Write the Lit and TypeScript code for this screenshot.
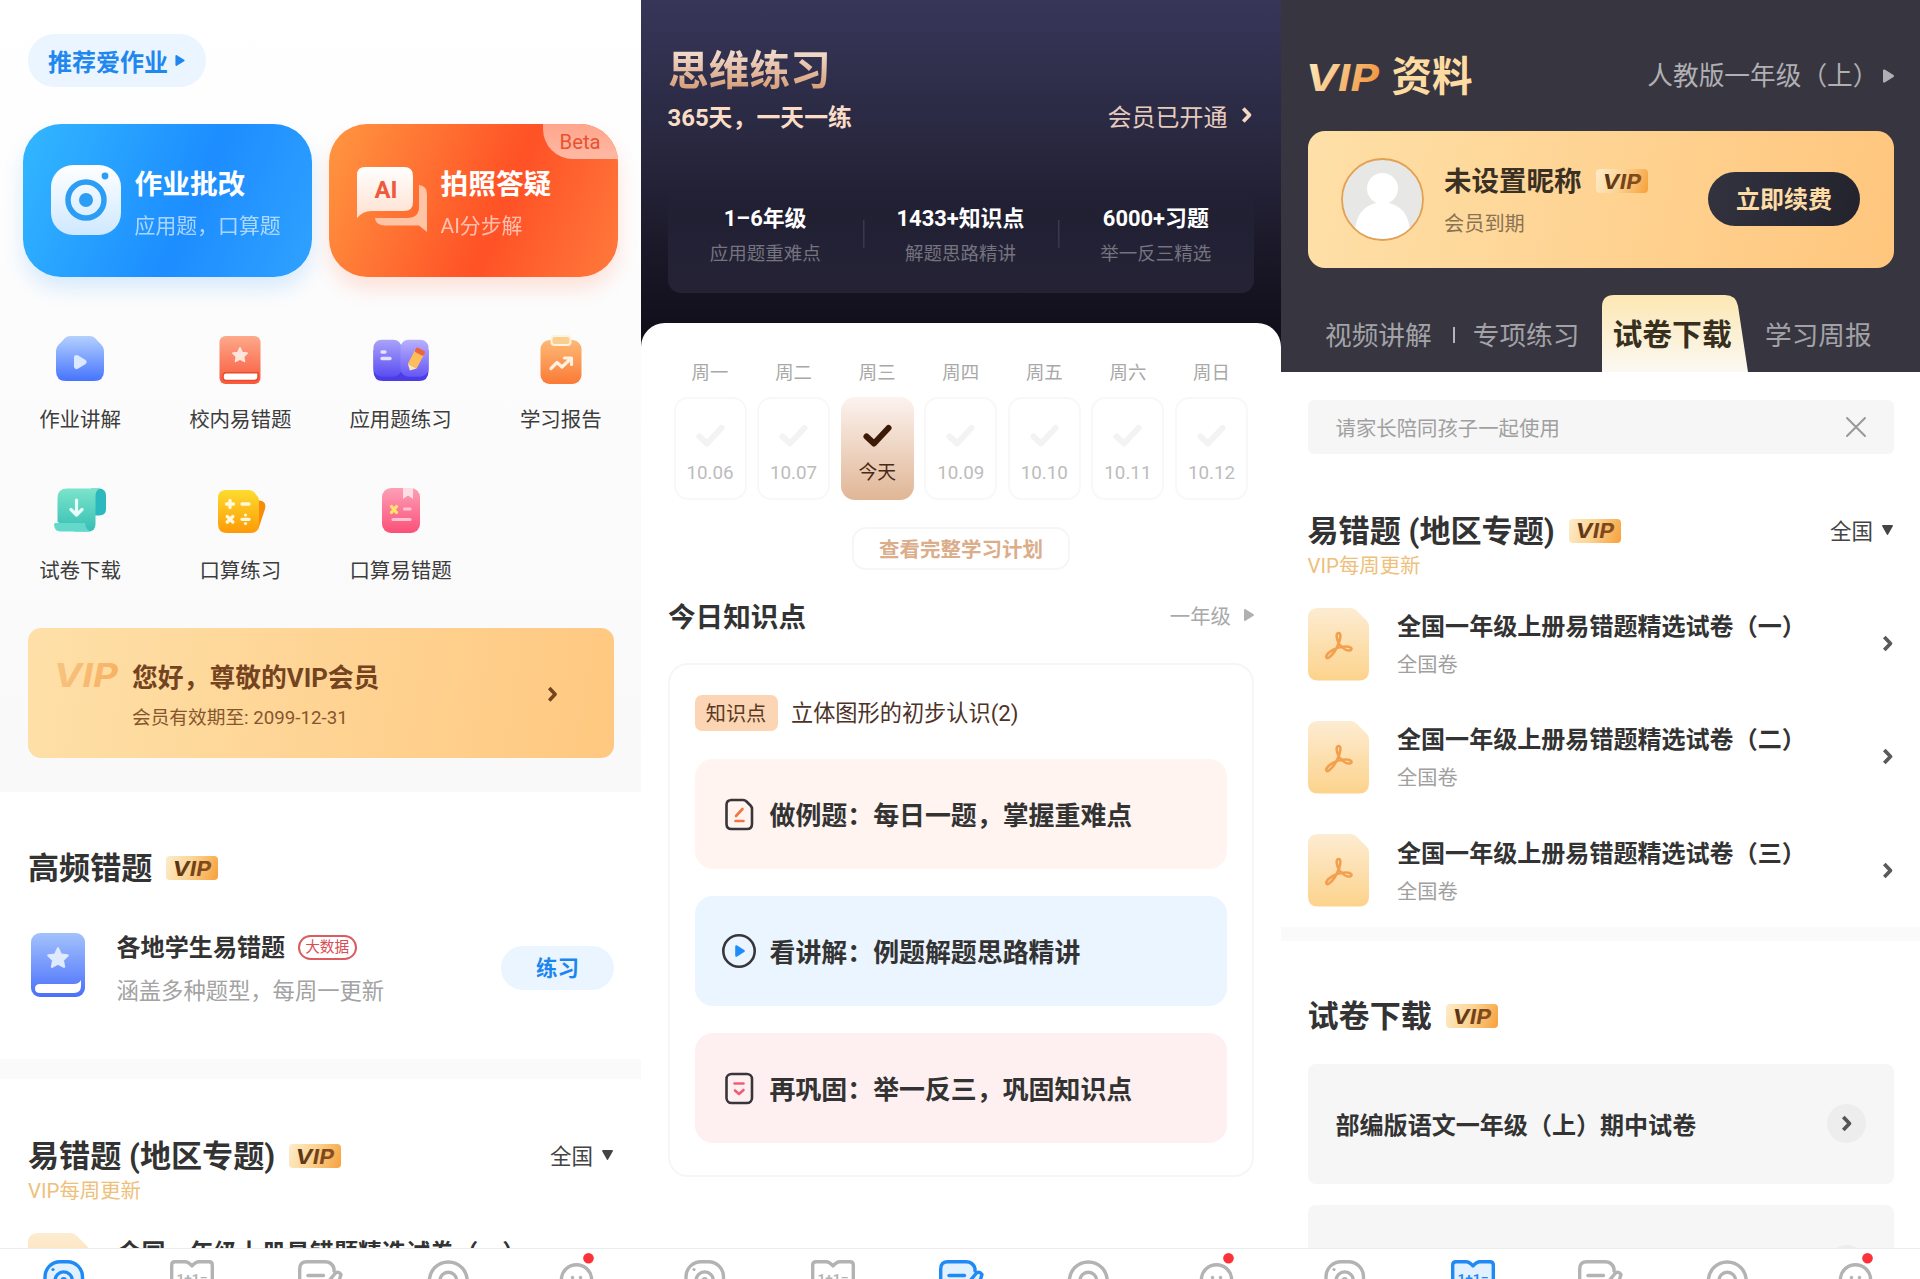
import { LitElement, html, svg, css } from "lit";
import { customElement, property } from "lit/decorators.js";
import { classMap } from "lit/directives/class-map.js";

const base = css`
  :host { display: block; box-sizing: border-box; font-family: Roboto, "Noto Sans CJK SC", sans-serif; color: #333; }
  *, *::before { box-sizing: border-box; }
  svg { display: block; flex: none; overflow: visible; }
  .row { display: flex; align-items: center; }
  .between { justify-content: space-between; }
  .h1 { font-size: 31.1px; line-height: 40px; font-weight: 700; white-space: pre; }
`;

/* ---------- shared glyphs ---------- */

const chevron = (w: number, h: number, color: string, sw = 3.7) => html`
  <svg width=${w} height=${h} viewBox="0 0 10 15" fill="none" stroke=${color} stroke-width=${sw}>
    <path d="M1.3 1 L7.500 7.5 L1.3 14" stroke-linejoin="round"/></svg>`;

const triRight = (w: number, h: number, color: string) => html`
  <svg width=${w} height=${h} viewBox="0 0 10 12" fill=${color} stroke=${color} stroke-width="2" stroke-linejoin="round">
    <path d="M1 1 L9 6 L1 11 Z"/></svg>`;

const triDown = () => html`
  <svg width="11" height="10" viewBox="0 0 11 10" fill="#444" stroke="#444" stroke-width="1.4" stroke-linejoin="round">
    <path d="M.8 .8 H10.2 L5.5 9.2 Z"/></svg>`;

const vipLogo = (w: number, h: number, from: string, to: string) => html`
  <svg width=${w} height=${h}>
    <defs><linearGradient id="vg" x1="0" x2="1" y1="0" y2=".3"><stop offset=".2" stop-color=${from}/><stop offset="1" stop-color=${to}/></linearGradient></defs>
    <text x=${-w * 0.04} y=${h} fill="url(#vg)" font-family="Inter, sans-serif" font-style="italic" font-weight="700"
      font-size=${h / 0.727} textLength=${w * 1.04} lengthAdjust="spacingAndGlyphs">VIP</text></svg>`;

@customElement("vip-badge")
class VipBadge extends LitElement {
  static styles = [base, css`
    :host { width: 52px; height: 24px; border-radius: 4px; padding: 4.500px 0 0 8px; margin-top: -2px;
      background: linear-gradient(110deg, #fdeccb 0%, #fbd596 45%, #f7a03a 100%); }
  `];
  render() { return vipLogo(37, 14.5, "#5b3313", "#8a5120"); }
}

/* ---------- bottom tab bar ---------- */

@customElement("tab-bar")
class TabBar extends LitElement {
  @property({ type: Number }) active = 0;
  static styles = [base, css`
    :host { height: 31px; flex: none; background: #fff; border-top: 1px solid #ececec; overflow: hidden; }
    .tabs { display: grid; grid-template-columns: repeat(5, 1fr); padding-top: 11px; height: 60px; }
    .tab { display: flex; justify-content: center; color: #b3b3b3; --tint: transparent; }
    .tab.on { color: #1f8af5; --tint: #e2f1ff; }
    .tab svg { fill: none; stroke: currentColor; stroke-width: 3.4; stroke-linejoin: round; stroke-linecap: round; }
    .solid { fill: currentColor; stroke: none; }
    .tint { fill: var(--tint); }
    .sum { font: 700 12.5px Roboto, sans-serif; fill: currentColor; stroke: none; }
    .dot { fill: #fb3338; stroke: none; }
  `];
  icons = [
    svg`<rect class="tint" x="3" y="1.7" width="37.5" height="38" rx="15"/><circle cx="21.7" cy="20.5" r="8.6"/><circle cx="21.7" cy="20.5" r="2.4" stroke-width="2"/><circle class="solid" cx="11" cy="9.5" r="1.6"/>`,
    svg`<path class="tint" d="M1.7 40 V5 Q1.7 1.7 5 1.7 H15 Q18.5 1.7 22 6 Q25.500 1.7 29 1.7 H39 Q42.300 1.700 42.300 5 V40 Z"/><text class="sum" x="6.500" y="23" textLength="31" lengthAdjust="spacingAndGlyphs">1+1=</text>`,
    svg`<path class="tint" d="M30 40 H6 Q1.700 40 1.700 34 V9 Q1.700 1.700 9 1.700 H27 Q34 1.700 36 8.500 V11 M26 32 L27.500 25 L37.500 13 Q40.500 11 43 14.500 L41 21 L31 32 Z"/><path d="M10 15.500 H25.500"/>`,
    svg`<circle class="tint" cx="21.300" cy="21" r="19"/><circle cx="21.300" cy="20.500" r="8.300"/>`,
    svg`<path class="tint" d="M6.500 34 V17.500 A15.200 15.200 0 0 1 36.500 17.500 V34 Z"/><circle class="solid" cx="17.500" cy="17.500" r="1.700"/><circle class="solid" cx="25.500" cy="17.500" r="1.700"/><circle class="dot" cx="33.500" cy="-1.800" r="5.300"/>`,
  ];
  render() {
    return html`<div class="tabs">${this.icons.map((g, i) => html`
      <div class=${classMap({ tab: true, on: i === this.active })}><svg width="44" height="44" viewBox="0 0 44 44">${g}</svg></div>`)}</div>`;
  }
}

/* ---------- regional papers ---------- */

@customElement("region-papers")
class RegionPapers extends LitElement {
  @property({ type: Number }) count = 3;
  static styles = [base, css`
    :host { padding-top: 58px; }
    .h1 { margin-right: 14px; }
    .pick { font-size: 21.500px; line-height: 30px; gap: 9px; margin-left: auto; margin-right: 1px; color: #444; }
    .pick svg { margin-top: -4px; }
    .note { font-size: 20.400px; line-height: 26px; color: #eec07c; margin: 1px 0 29px; }
    .item { display: grid; grid-template-columns: 61px 1fr 11px; column-gap: 28.500px; align-items: center; height: 72.500px; margin-bottom: 40.700px; }
    .name { font-size: 24.050px; line-height: 32px; font-weight: 700; margin-top: 3px; white-space: nowrap; }
    .scope { font-size: 20.200px; line-height: 28px; color: #a0a0a0; margin-top: 8px; }
  `];
  render() {
    return html`
      <div class="row"><div class="h1">易错题 (地区专题)</div><vip-badge></vip-badge>
        <div class="row pick">全国${triDown()}</div></div>
      <div class="note">VIP每周更新</div>
      ${["一", "二", "三"].slice(0, this.count).map(n => html`<div class="item">
        <svg width="61" height="72.500" viewBox="0 0 61 72.500">
          <defs><linearGradient id="f" x2="0" y2="1"><stop stop-color="#fdecd2"/><stop offset="1" stop-color="#fcd38c"/></linearGradient></defs>
          <path fill="url(#f)" d="M10 0 H43 Q46 0 48.500 2.500 L58.500 12.500 Q61 15 61 18 V62.500 Q61 72.500 51 72.500 H10 Q0 72.500 0 62.500 V10 Q0 0 10 0 Z"/>
          <path fill="none" stroke="#f2a04e" stroke-width="2.600" stroke-linejoin="round" d="M30.500 25 C27.500 25 28.500 32 31.500 36.500 C34.500 40.500 39 43 42 42.500 C45 41.500 43.500 38.500 38 38.500 C32 38.500 25 41 20.500 45 C17 48.500 18 51.500 21 49.500 C25 46.500 29.500 39 31.500 33 C33 28 32.500 25 30.500 25 Z"/>
        </svg>
        <div><div class="name">全国一年级上册易错题精选试卷（${n}）</div><div class="scope">全国卷</div></div>
        ${chevron(10, 15, "#5a5a5a")}
      </div>`)}`;
  }
}

/* ---------- home ---------- */

const star = (x: number, y: number, s: number, fill: string) => svg`<path transform="translate(${x} ${y}) scale(${s})" fill=${fill} stroke=${fill} stroke-width="2" stroke-linejoin="round" d="M0 -8 L2.400 -2.800 L8 -2.200 L3.900 1.700 L5 7.200 L0 4.500 L-5 7.200 L-3.900 1.700 L-8 -2.200 L-2.400 -2.800 Z"/>`;
const grad = (id: string, a: string, b: string) => svg`<linearGradient id=${id} x2="0" y2="1"><stop stop-color=${a}/><stop offset="1" stop-color=${b}/></linearGradient>`;

const features = [
  { label: "作业讲解", icon: svg`<defs>${grad("a", "#b5d0ff", "#4574fd")}</defs>
    <path fill="url(#a)" d="M15 1 H35 Q38 1 40 3 L47 10.500 Q49 13 49 16 V36 Q49 46 39 46 H11 Q1 46 1 36 V16 Q1 13 3 10.500 L10 3 Q12 1 15 1 Z"/>
    <path d="M21.500 22.500 L29 27 L21.500 31.500 Z" fill="#dbe8ff" stroke="#dbe8ff" stroke-width="5" stroke-linejoin="round"/>` },
  { label: "校内易错题", icon: svg`<defs>${grad("b", "#fda98b", "#f9593b")}</defs>
    <rect x="4.500" y="1" width="41" height="48" rx="6" fill="url(#b)"/><path d="M11 37.700 H43 V42 Q43 45.500 39 45.500 H11 Q8 45.500 8 41.500 Q8 37.700 11 37.700 Z" fill="#fff" stroke="#e84a2c" stroke-width="1.500"/>${star(25, 20, .88, "#ffe5dc")}` },
  { label: "应用题练习", icon: svg`<defs>${grad("c", "#aaa3fa", "#5a4df2")}${grad("c2", "#b9b1ff", "#6657f5")}</defs>
    <path fill="#4b3ce6" d="M-2.500 15 H52.500 V36 Q52.500 46 43 46 H7 Q-2.500 46 -2.500 36 Z"/>
    <rect x="-2.500" y="4.700" width="28" height="37" rx="8" fill="url(#c)"/><rect x="24.500" y="4.700" width="28" height="37" rx="8" fill="url(#c2)"/>
    <path d="M6 17 h3 M6 23.500 h8" stroke="#e5e2ff" stroke-width="3.400" stroke-linecap="round"/>
    <g transform="translate(39.500 25) rotate(28)"><rect x="-5" y="-8" width="10" height="15" fill="#fdbd58"/><path d="M-5 7 L0 12 L5 7 Z" fill="#ffe3b0"/><rect x="-5" y="-12" width="10" height="5" rx="1.500" fill="#f0633c"/></g>` },
  { label: "学习报告", icon: svg`<defs>${grad("d", "#fdb976", "#fb7a37")}</defs>
    <rect x="4.500" y="5" width="41" height="44" rx="9" fill="url(#d)"/><rect x="15.500" y="1" width="19" height="9" rx="3" fill="#f8cf8e" stroke="#fff2dc" stroke-width="2"/>
    <path d="M15 33.500 L21 27.500 L26 32 L34.500 24 M28.500 23 H35.500 V29.500" fill="none" stroke="#fff1e2" stroke-width="3.200" stroke-linecap="round" stroke-linejoin="round"/>` },
  { label: "试卷下载", icon: svg`<defs>${grad("e", "#7ce4cb", "#35bfb4")}</defs>
    <path d="M36 2.500 H44 Q51 2.500 51 10 V23 Q51 29.500 44 29.500 H38 Z" fill="#2cb9bd"/>
    <path d="M12 2.500 H46 Q40.500 3 40.500 10 V38 Q40.500 45.500 33 45.500 H20 L2.500 36 V12 Q2.500 2.500 12 2.500 Z" fill="url(#e)"/>
    <path d="M0 37 H30 Q31 45.500 37 45.500 H6 Q-1 45.500 -1 38 Z" fill="#62d9ca"/>
    <path d="M21.500 14 V28 M16 23.500 L21.500 29 L27 23.500" fill="none" stroke="#e6fffa" stroke-width="3.200" stroke-linecap="round" stroke-linejoin="round"/>` },
  { label: "口算练习", icon: svg`<defs>${grad("g", "#fddc2e", "#fd9a07")}</defs>
    <path d="M36 13 L47 15 Q51.500 17 50 23 L44 41 Q43 45 38 46 Z" fill="#f78c08"/>
    <path d="M11 4 H34 Q37 4 39 6 L43 11 Q44 12.500 44 15 V38 Q44 47 35 47 H12 Q3 47 3 38 V12 Q3 4 11 4 Z" fill="url(#g)"/>
    <g stroke="#fff8dc" stroke-width="3.300" stroke-linecap="round" fill="none"><path d="M11.500 18 h7 M15 14.500 v7 M27 18 h7 M12.300 30.500 l5.500 5.500 M17.800 30.500 l-5.500 5.500 M27 33.300 h7"/></g><circle cx="30.500" cy="29" r="1.600" fill="#fff8dc"/><circle cx="30.500" cy="37.500" r="1.600" fill="#fff8dc"/>` },
  { label: "口算易错题", icon: svg`<defs>${grad("h", "#fd9fb6", "#fb5078")}</defs>
    <rect x="6" y="2" width="38" height="45" rx="9" fill="url(#h)"/><path d="M27 2 H37 V13 L32 9.500 L27 13 Z" fill="#ffdde5"/>
    <path d="M15.500 20.500 l5 6 M20.500 20.500 l-5 6" stroke="#ffe36d" stroke-width="3.200" stroke-linecap="round"/><path d="M28.500 23 h5.500 M17 33.500 h17" stroke="#ffc3d1" stroke-width="3.200" stroke-linecap="round"/>` },
];

@customElement("home-screen")
class HomeScreen extends LitElement {
  static styles = [base, css`
    :host { display: flex; flex-direction: column; height: 1279px; background: #fff; overflow: hidden; }
    .body { flex: 1; min-height: 0; overflow: hidden; }
    .top { height: 792px; padding: 34px 27px 0 28px; background: linear-gradient(#fff 0, #fcfcfc 40%, #f9f9fa 100%); }
    .pill { width: 178px; height: 53px; border-radius: 27px; background: #ebf5ff; color: #1f87ee; font-size: 24px; font-weight: 700; padding-left: 20px; gap: 7px; white-space: nowrap; }
    .heroes { display: grid; grid-template-columns: 289px 289px; gap: 17px; margin: 37px 0 0 -5px; }
    .hero { height: 153px; border-radius: 38px; color: #fff; position: relative; overflow: hidden; display: flex; padding: 41px 0 0 27.500px; }
    .wrap { border-radius: 38px; }
    .wrap.blue { box-shadow: 0 12px 20px rgba(31,140,255,.16); }
    .wrap.orange { box-shadow: 0 12px 20px rgba(255,90,40,.16); }
    .blue .hero { background: linear-gradient(113deg, #32b6ff 2%, #1f92ff 50%, #1d8dff 58%, #2fa2ff 100%); }
    .orange .hero { background: linear-gradient(113deg, #ff9540 2%, #ff5527 55%, #ff5226 60%, #ff7a3c 100%); }
    .copy { margin-left: 14px; }
    .big { font-size: 27.700px; line-height: 38px; font-weight: 700; white-space: nowrap; margin-top: 1px; }
    .small { font-size: 20.900px; line-height: 30px; margin-top: 6.500px; opacity: .62; white-space: nowrap; }
    .beta { position: absolute; top: 0; right: 0; width: 75px; height: 35px; border-radius: 0 0 0 30px; background: linear-gradient(#ffa58c, #ffb9a4); color: #e8532f; font-size: 20.300px; line-height: 37px; padding-left: 16.500px; }
    .features { display: grid; grid-template-columns: repeat(4, 160.250px); margin: 58px -27px 0 -28px; row-gap: 51px; }
    .feature { display: flex; flex-direction: column; align-items: center; height: 100px; font-size: 20.500px; line-height: 31px; gap: 20px; color: #3d3d3d; }
    .vip { height: 130px; margin-top: 42px; border-radius: 13px; background: linear-gradient(100deg, #fee0a8, #ffc880); color: #744320; display: flex; padding: 35px 57px 0 28px; }
    .vip .t { font-size: 25.800px; line-height: 36px; font-weight: 700; margin: -3px 0 0 14px; }
    .vip .s { font-size: 18.700px; line-height: 26px; color: #87552d; margin: 9px 0 0 14px; }
    .vip .go { margin: 24px 0 0 auto; }
    .freq { height: 267px; padding: 57px 27px 0 28px; }
    .freq .h1 { margin-right: 13.500px; }
    .entry { display: flex; margin-top: 44px; padding-left: 3px; }
    .txt { margin-left: 31.500px; }
    .name { font-size: 24.100px; line-height: 32px; font-weight: 700; gap: 12.500px; margin-top: -1px; }
    .tag { font-size: 14.700px; font-weight: 400; color: #d94d55; border: 2px solid #dc5a60; height: 25px; line-height: 21px; width: 59px; border-radius: 13px; text-align: center; margin-top: -1px; }
    .desc { font-size: 22.300px; line-height: 30px; margin-top: 12px; color: #a3a3a3; }
    .go-btn { width: 113px; height: 44px; margin: 13px 0 0 auto; border-radius: 22px; background: #eaf5ff; color: #1b87ee; font-size: 21.500px; line-height: 46px; font-weight: 700; text-align: center; }
    .band { height: 20px; background: #fafafa; }
    region-papers { margin: 0 27px 0 28px; }
  `];
  render() {
    return html`<div class="body">
      <div class="top">
        <div class="row pill">推荐爱作业 ${triRight(10, 11, "#1f87ee")}</div>
        <div class="heroes">
          <div class="wrap blue"><div class="hero">
            <svg width="70" height="70" viewBox="0 0 70 70"><defs>${grad("cam", "#ffffff", "#cfe8ff")}</defs>
              <rect width="70" height="70" rx="22" fill="url(#cam)"/><circle cx="35" cy="35" r="18" fill="none" stroke="#2b9df5" stroke-width="5.500"/><circle cx="35" cy="35" r="7" fill="#2b9df5"/><circle cx="54" cy="11" r="3.400" fill="#2b9df5"/></svg>
            <div class="copy"><div class="big">作业批改</div><div class="small">应用题，口算题</div></div>
          </div></div>
          <div class="wrap orange"><div class="hero">
            <svg width="70" height="70" viewBox="0 0 70 70"><defs>${grad("ai", "#ffffff", "#ffe0d0")}</defs>
              <path fill="#ffc3a6" d="M62 20 Q70 21 70 29 V67 L62 60.500 H27 Q18.500 60 18 53 H50 Q62 53 62 42 Z"/>
              <path fill="url(#ai)" d="M8 2 H47 Q56 2 56 11 V37 Q56 46 47 46 H14 Q6 46 0 53 V10 Q0 2 8 2 Z"/>
              <text x="17.500" y="32.500" textLength="23" lengthAdjust="spacingAndGlyphs" font-family="Roboto, sans-serif" font-weight="700" font-size="23.500" fill="#ee5a3c">AI</text></svg>
            <div class="copy"><div class="big">拍照答疑</div><div class="small">AI分步解</div></div>
            <div class="beta">Beta</div>
          </div></div>
        </div>
        <div class="features">${features.map(f => html`<div class="feature"><svg width="50" height="50" viewBox="0 0 50 50">${f.icon}</svg>${f.label}</div>`)}</div>
        <div class="vip">${vipLogo(62, 24, "#f7c27f", "#f7b263")}
          <div><div class="t">您好，尊敬的VIP会员</div><div class="s">会员有效期至: 2099-12-31</div></div>
          <div class="go">${chevron(9.500, 14.500, "#744320")}</div></div>
      </div>
      <div class="freq">
        <div class="row"><div class="h1">高频错题</div><vip-badge></vip-badge></div>
        <div class="entry">
          <svg width="54" height="64" viewBox="0 0 54 64"><defs>${grad("bk", "#a3c2fd", "#4a70fb")}</defs>
            <rect width="54" height="64" rx="9" fill="url(#bk)"/><path d="M9 51 H43 Q48 51 50 47 V53 Q50 60 43 60 H9 Q4 60 4 55.500 Q4 51 9 51 Z" fill="#fff"/>${star(27, 25, 1.200, "#dfeaff")}</svg>
          <div class="txt"><div class="row name">各地学生易错题<span class="tag">大数据</span></div><div class="desc">涵盖多种题型，每周一更新</div></div>
          <div class="go-btn">练习</div>
        </div>
      </div>
      <div class="band"></div>
      <region-papers .count=${1}></region-papers>
    </div><tab-bar .active=${0}></tab-bar>`;
  }
}

/* ---------- thinking practice ---------- */

@customElement("practice-screen")
class PracticeScreen extends LitElement {
  static styles = [base, css`
    :host { display: flex; flex-direction: column; height: 1279px; background: linear-gradient(#373659 0, #292840 140px, #1d1b2c 230px, #110f1a 330px, #110f1a 350px, #fff 350px); overflow: hidden; }
    .head { height: 323px; padding: 46px 27px 0; flex: none; }
    .title { font-size: 40.700px; line-height: 50px; font-weight: 700; width: max-content; background: linear-gradient(#f0d8c9 15%, #d9a27e 80%); -webkit-background-clip: text; color: transparent; }
    .line { height: 34px; margin-top: 2px; }
    .slogan { font-size: 23.900px; font-weight: 700; color: #fbdcc6; margin-left: -.5px; }
    .member { font-size: 24px; color: #e6cbbd; gap: 14px; padding-right: 2.500px; }
    .stats { display: grid; grid-template-columns: repeat(3, 1fr); height: 123px; margin-top: 38px; border-radius: 13px; padding-top: 34px; text-align: center; background: linear-gradient(rgba(36,34,53,0) 0, #232135 60%, #242233 100%); }
    .stats > div { position: relative; left: -.5px; }
    .stats > div + div { background: linear-gradient(#3a384a, #3a384a) 0 16px / 1.500px 28px no-repeat; }
    .num { font-size: 21.900px; line-height: 30px; font-weight: 700; color: #fff; }
    .cap { font-size: 18.500px; line-height: 26px; margin-top: 7px; color: #75737f; }
    .sheet { flex: 1; min-height: 0; background: #fff; border-radius: 24px 24px 0 0; padding: 36px 27px 0; }
    .week { display: grid; grid-template-columns: repeat(7, 73px); justify-content: space-between; padding: 0 6px 0 5.500px; text-align: center; }
    .wd { font-size: 18.400px; line-height: 28px; color: #a8a8a8; }
    .day { height: 103px; margin-top: 10px; border: 2px solid #f8f8f8; border-radius: 14px; display: flex; flex-direction: column; align-items: center; padding-top: 24px; font-size: 18.800px; line-height: 26px; color: #bcbcbc; gap: 12px; --tick: #f3f3f3; }
    .day.now { border: 0; padding-top: 26px; background: linear-gradient(#fcf3ef, #e0b696); color: #4a2a15; --tick: #3c1a06; }
    .day svg { stroke: var(--tick); }
    .plan { width: 218px; height: 43px; margin: 26.500px auto 0; border: 2px solid #f6f6f6; border-radius: 14px; font-size: 20.500px; line-height: 42px; text-align: center; font-weight: 700; color: #dbad8b; }
    .sub { margin-top: 25.500px; height: 40px; }
    .sub .h { font-size: 27.600px; font-weight: 700; }
    .grade { font-size: 20.400px; color: #a9a9a9; gap: 13px; }
    .card { margin-top: 27.500px; height: 514px; border: 2px solid #f6f6f6; border-radius: 20px; padding: 30.500px 25px 0 24.500px; }
    .topic { gap: 13.500px; height: 36px; margin-bottom: 28px; font-size: 22.200px; line-height: 34px; color: #4c3227; }
    .chip { background: #fcd6b4; border-radius: 7px; width: 83px; height: 36px; line-height: 38px; text-align: center; font-size: 20.200px; color: #5a3a26; }
    .step { height: 110px; border-radius: 18px; margin-bottom: 27.200px; padding: 0 0 1px 27px; gap: 14px; font-size: 25.920px; font-weight: 700; }
    .s0 { background: #fff4f0; } .s1 { background: #eaf5ff; } .s2 { background: #fef0f0; }
  `];
  days = ["10.06", "10.07", "今天", "10.09", "10.10", "10.11", "10.12"];
  steps = [
    { t: "做例题：每日一题，掌握重难点", i: svg`<path d="M9 3 H21 Q23 3 24.500 4.500 L28.500 8.500 Q30 10 30 12 V27 Q30 32 25 32 H9.500 Q4.500 32 4.500 27 V8 Q4.500 3 9.500 3 Z"/><path d="M14 19 L20.500 12 M13.500 24 H21.500" stroke="#f2763f"/>` },
    { t: "看讲解：例题解题思路精讲", i: svg`<circle cx="17" cy="17" r="15.700"/><path d="M14.500 12.500 L21.500 17 L14.500 21.500 Z" fill="#1f8cf8" stroke="#1f8cf8"/>` },
    { t: "再巩固：举一反三，巩固知识点", i: svg`<rect x="4.500" y="3" width="25.500" height="29" rx="5"/><path d="M12.500 12.500 H21.500 M13 19.500 L17 23 L21.500 19" stroke="#ef5d75"/>` },
  ];
  render() {
    return html`
      <div class="head">
        <div class="title">思维练习</div>
        <div class="row between line"><div class="slogan">365天，一天一练</div><div class="row member">会员已开通${chevron(10, 16, "#f4d9c8")}</div></div>
        <div class="stats">${[["1–6年级", "应用题重难点"], ["1433+知识点", "解题思路精讲"], ["6000+习题", "举一反三精选"]].map(([a, b]) => html`<div><div class="num">${a}</div><div class="cap">${b}</div></div>`)}</div>
      </div>
      <div class="sheet">
        <div class="week">${[..."一二三四五六日"].map((d, i) => html`<div><div class="wd">周${d}</div>
          <div class=${classMap({ day: true, now: i === 2 })}>
            <svg width="29" height="25" viewBox="0 0 29 25" fill="none" stroke-width="6" stroke-linecap="round" stroke-linejoin="round"><path d="M3.500 13.500 L11 20.500 L25.500 5"/></svg>${this.days[i]}</div></div>`)}</div>
        <div class="plan">查看完整学习计划</div>
        <div class="row between sub"><div class="h">今日知识点</div><div class="row grade">一年级${triRight(10, 12, "#b0b0b0")}</div></div>
        <div class="card">
          <div class="row topic"><span class="chip">知识点</span>立体图形的初步认识(2)</div>
          ${this.steps.map((s, i) => html`<div class="row step s${i}"><svg width="34" height="34" viewBox="0 0 34 34" fill="none" stroke="#38363a" stroke-width="2.600" stroke-linecap="round" stroke-linejoin="round">${s.i}</svg>${s.t}</div>`)}
        </div>
      </div>
      <tab-bar .active=${2}></tab-bar>`;
  }
}

/* ---------- VIP library ---------- */

@customElement("library-screen")
class LibraryScreen extends LitElement {
  static styles = [base, css`
    :host { display: flex; flex-direction: column; height: 1279px; background: #fff; overflow: hidden; }
    .body { flex: 1; min-height: 0; overflow: hidden; }
    .head { height: 372px; background: #373640; padding: 49px 26px 0 26.500px; }
    .bar { height: 56px; }
    .name { font-size: 40.500px; line-height: 58px; font-weight: 700; color: #fedba0; margin-left: 13px; }
    .book { margin-left: auto; font-size: 25.700px; line-height: 36px; color: #b0afb3; gap: 4.500px; margin-top: -3px; }
    .card { height: 137px; margin-top: 26px; border-radius: 17px; background: linear-gradient(100deg, #fee0a8, #ffc67d); display: flex; padding: 27px 34px 0 33.500px; }
    .who { margin: 5px 0 0 20px; }
    .nick { font-size: 27.500px; line-height: 38px; font-weight: 700; color: #3a3024; gap: 14px; }
    .due { font-size: 20.200px; line-height: 28px; margin-top: 9px; color: #8a7352; }
    .renew { width: 152px; height: 54px; margin: 14px 0 0 auto; border-radius: 27px; background: linear-gradient(100deg, #33333f, #23232e); color: #fedca6; font-size: 24px; line-height: 56px; font-weight: 700; text-align: center; }
    .tabs { display: flex; height: 77px; margin-top: 27px; padding-left: 17.500px; font-size: 26.700px; line-height: 82px; color: #a3a2a7; white-space: nowrap; }
    .sep { width: 2px; height: 16px; background: #b5b4b9; margin: 32px 18px 0 21px; }
    .cur { width: 146px; margin: 0 17px 0 22.500px; position: relative; font-size: 29.800px; font-weight: 700; line-height: 80px; color: #38301f; padding-left: 10.500px; }
    .cur svg { position: absolute; inset: 0; }
    .cur span { position: relative; }
    .notice { height: 53.500px; margin: 28px 26px 0 26.500px; border-radius: 6px; background: #f6f6f6; color: #a0a0a0; font-size: 20.400px; padding: 0 28px; }
    region-papers { margin: 0 26px 0 26.500px; height: 473.500px; overflow: hidden; }
    .band { height: 14px; background: #fafafa; }
    .down { padding: 56px 26px 0 26.500px; }
    .down .h1 { margin-right: 14px; }
    .paper { height: 120px; margin-top: 27px; border-radius: 8px; background: #f6f6f6; padding: 0 28px 2px; font-size: 24.050px; font-weight: 700; }
    .paper + .paper { margin-top: 21px; }
    .round { width: 39px; height: 39px; border-radius: 50%; background: #ededed; display: grid; place-items: center; }
  `];
  render() {
    return html`<div class="body">
      <div class="head">
        <div class="row bar">${vipLogo(71, 27, "#fde0ad", "#f19a45")}<div class="name">资料</div>
          <div class="row book">人教版一年级（上）${triRight(11, 14, "#b0afb3")}</div></div>
        <div class="card">
          <svg width="83" height="83" viewBox="0 0 83 83"><defs><clipPath id="av"><circle cx="41.500" cy="41.500" r="39.500"/></clipPath></defs>
            <circle cx="41.500" cy="41.500" r="40.500" fill="#e7e7e6" stroke="#e3a052" stroke-width="1.800"/>
            <g fill="#fff" clip-path="url(#av)"><ellipse cx="41.500" cy="30.500" rx="15.500" ry="15.500"/><path d="M35 40 H48 V45 Q68 50 69 74 V83 H14 V74 Q15 50 35 45 Z"/></g></svg>
          <div class="who"><div class="row nick">未设置昵称<vip-badge></vip-badge></div><div class="due">会员到期</div></div>
          <div class="renew">立即续费</div>
        </div>
        <div class="tabs"><span>视频讲解</span><i class="sep"></i><span>专项练习</span>
          <div class="cur"><svg width="146" height="77" viewBox="0 0 146 77"><defs>${grad("tab", "#fde7b2", "#fbf9f3")}</defs>
            <path fill="url(#tab)" d="M0 77 V12 Q0 0 12 0 H123 Q134 0 136 11 L146 77 Z"/></svg><span>试卷下载</span></div>
          <span>学习周报</span></div>
      </div>
      <div class="row between notice">请家长陪同孩子一起使用
        <svg width="20" height="18" viewBox="0 0 20 18" stroke="#999" stroke-width="2" stroke-linecap="round"><path d="M1 0 L19 18 M19 0 L1 18"/></svg></div>
      <region-papers></region-papers>
      <div class="band"></div>
      <div class="down">
        <div class="row"><div class="h1">试卷下载</div><vip-badge></vip-badge></div>
        <div class="row between paper">部编版语文一年级（上）期中试卷<span class="round">${chevron(10, 15, "#555")}</span></div>
        <div class="row between paper"><span></span><span class="round"></span></div>
      </div>
    </div><tab-bar .active=${1}></tab-bar>`;
  }
}

@customElement("app-root")
class AppRoot extends LitElement {
  static styles = [base, css`
    :host { display: grid; grid-template-columns: 641px 640px 639px; width: 1920px; height: 1279px; overflow: hidden; background: #fff; }
  `];
  render() { return html`<home-screen></home-screen><practice-screen></practice-screen><library-screen></library-screen>`; }
}
